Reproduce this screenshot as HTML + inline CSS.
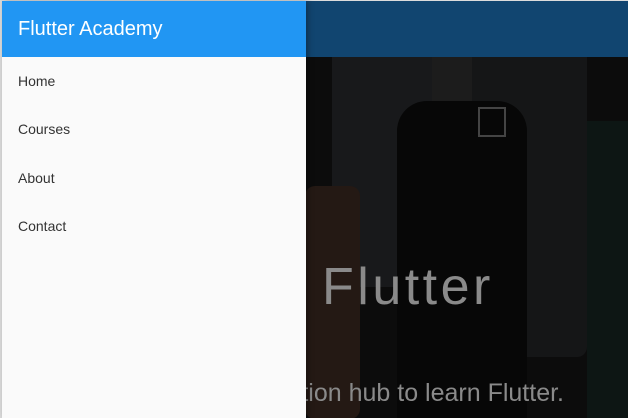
<!DOCTYPE html>
<html><head><style>
*{margin:0;padding:0;box-sizing:border-box}
body{width:628px;height:418px;overflow:hidden;background:#dcdcdc;font-family:"Liberation Sans",sans-serif;position:relative}
.main{position:absolute;left:2px;top:1px;right:0;bottom:0;background:#0c0c0c;overflow:hidden}
.appbar{position:absolute;left:0;top:0;right:0;height:56px;background:#114570}
.shape{position:absolute}
.drawer{position:absolute;left:2px;top:1px;width:304px;bottom:0;background:#fafafa;box-shadow:2px 0 6px rgba(0,0,0,.3)}
.hdr{height:56px;background:#2196f3;color:#fff;font-size:20px;padding:17px 0 0 16px}
.item{position:absolute;left:16px;font-size:14px;color:#333}
</style></head><body>
<div class="main">
 <div class="appbar"></div>
 <div class="shape" style="left:330px;top:56px;width:135px;height:230px;background:#18191b;border-radius:0 0 40px 10px"></div>
 <div class="shape" style="left:430px;top:56px;width:60px;height:50px;background:#1c1c1c"></div>
 <div class="shape" style="left:470px;top:56px;width:115px;height:300px;background:#151617;border-radius:0 0 10px 40px"></div>
 <div class="shape" style="left:395px;top:100px;width:130px;height:318px;background:#070707;border-radius:30px 30px 0 0"></div>
 <div class="shape" style="left:476px;top:106px;width:28px;height:30px;border:2px solid #444"></div>
 <div class="shape" style="left:303px;top:185px;width:55px;height:233px;background:#241914;border-radius:10px"></div>
 <div class="shape" style="left:585px;top:120px;width:43px;height:298px;background:#0d1614"></div>
 <div class="shape" style="left:320px;top:256px;font-size:52px;letter-spacing:3.5px;color:#8a8a8a;line-height:60px">Flutter</div>
 <div class="shape" style="right:64px;top:378px;font-size:25px;color:#8a8a8a;white-space:nowrap">Your education hub to learn Flutter.</div>
</div>
<div class="drawer">
 <div class="hdr">Flutter Academy</div>
 <div class="item" style="top:72px">Home</div>
 <div class="item" style="top:120px">Courses</div>
 <div class="item" style="top:169px">About</div>
 <div class="item" style="top:217px">Contact</div>
</div>
</body></html>
